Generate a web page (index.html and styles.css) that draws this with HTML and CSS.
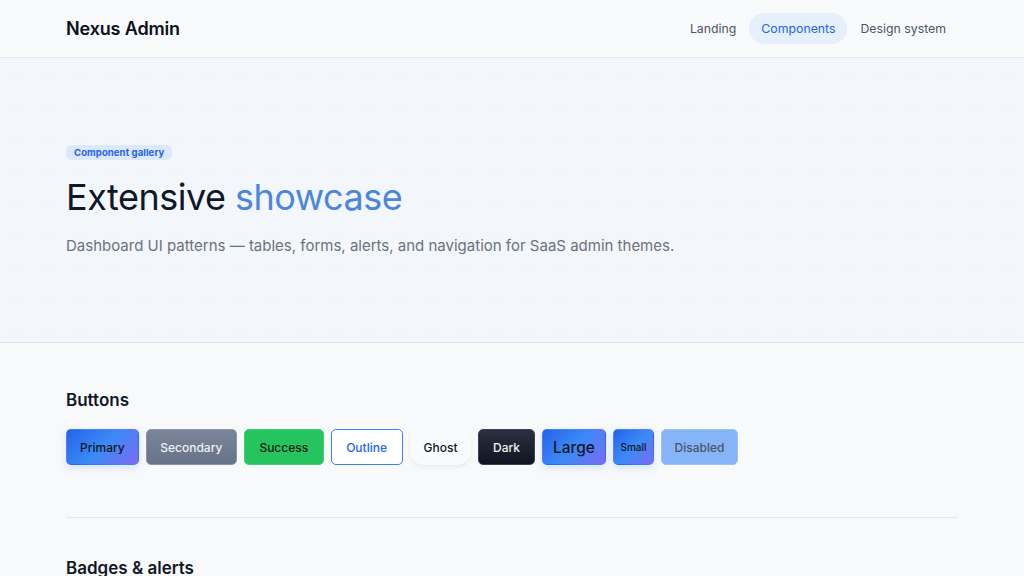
FILE: index.html
```html
<!DOCTYPE html>
<html lang="en">
<head>
<meta charset="utf-8">
<title>Nexus Admin — Components</title>
<link rel="stylesheet" href="styles.css">
</head>
<body>
<header class="topbar">
  <div class="container topbar-inner">
    <div class="brand">Nexus Admin</div>
    <nav class="nav">
      <a class="nav-link">Landing</a>
      <a class="nav-link active">Components</a>
      <a class="nav-link">Design system</a>
    </nav>
  </div>
</header>
<section class="hero">
  <div class="container hero-inner">
    <span class="eyebrow">Component gallery</span>
    <h1 class="hero-title">Extensive <span class="accent">showcase</span></h1>
    <p class="hero-sub">Dashboard UI patterns — tables, forms, alerts, and navigation for SaaS admin themes.</p>
  </div>
</section>
<main class="content">
  <div class="container">
    <section class="block">
      <h2 class="block-title">Buttons</h2>
      <div class="btn-row">
        <button class="btn btn-primary">Primary</button>
        <button class="btn btn-secondary">Secondary</button>
        <button class="btn btn-success">Success</button>
        <button class="btn btn-outline">Outline</button>
        <button class="btn btn-ghost">Ghost</button>
        <button class="btn btn-dark">Dark</button>
        <button class="btn btn-primary btn-lg">Large</button>
        <button class="btn btn-primary btn-sm">Small</button>
        <button class="btn btn-disabled">Disabled</button>
      </div>
    </section>
    <hr class="divider">
    <section class="block block-next">
      <h2 class="block-title">Badges &amp; alerts</h2>
    </section>
  </div>
</main>
</body>
</html>
```
FILE: styles.css
```css
* { box-sizing: border-box; }
html, body { margin: 0; padding: 0; }
body {
  font-family: Inter, "Noto Sans", "Liberation Sans", sans-serif;
  color: #111827;
  background-color: #f8f9fb;
  background-image: radial-gradient(circle, rgba(148, 163, 184, 0.08) 1px, transparent 1.2px);
  background-size: 32px 32px;
  overflow: hidden;
}
.container {
  max-width: 892px;
  margin: 0 auto;
}
.topbar {
  height: 58px;
  border-bottom: 1px solid #e6e9ef;
  background: rgba(249, 250, 252, 0.92);
}
.topbar-inner {
  height: 57px;
  display: flex;
  align-items: center;
  justify-content: space-between;
}
.brand {
  font-size: 18px;
  font-weight: 600;
  letter-spacing: -0.15px;
  color: #0b0f19;
}
.nav {
  display: flex;
  align-items: center;
  gap: 1px;
  margin-right: 0;
}
.nav-link {
  font-size: 12.3px;
  color: #4b5563;
  padding: 8px 12px;
  border-radius: 16px;
  line-height: 15px;
}
.nav-link.active {
  background: #e6effc;
  color: #2563eb;
}
.hero {
  height: 285px;
  background-color: #f3f6fb;
  background-image: radial-gradient(circle, rgba(148, 163, 184, 0.07) 1px, transparent 1.2px);
  background-size: 32px 32px;
  border-bottom: 1px solid #dfe3ec;
  padding-top: 87px;
}
.hero-inner {
  display: flex;
  flex-direction: column;
  align-items: flex-start;
}
.eyebrow {
  display: block;
  font-size: 9.5px;
  font-weight: 700;
  color: #2563eb;
  background: #dce8fb;
  padding: 2px 8px;
  border-radius: 6px;
  line-height: 11px;
  letter-spacing: 0.1px;
}
.hero-title {
  margin: 15px 0 0;
  font-size: 36px;
  font-weight: 400;
  letter-spacing: -0.5px;
  line-height: 44px;
  color: #0f172a;
}
.accent { color: #4a86de; }
.hero-sub {
  margin: 17px 0 0;
  font-size: 15px;
  color: #6b7280;
  line-height: 20px;
}
.content { padding-top: 46px; }
.block-title {
  margin: 0;
  font-size: 17px;
  font-weight: 600;
  line-height: 22px;
  color: #111827;
}
.btn-row {
  display: flex;
  align-items: center;
  gap: 7px;
  margin-top: 18px;
}
.btn {
  font-family: inherit;
  height: 36px;
  font-size: 12px;
  font-weight: 500;
  padding: 0 14px;
  border-radius: 5px;
  border: 1px solid transparent;
  cursor: pointer;
}
.btn-primary {
  background: linear-gradient(135deg, #2563eb 0%, #3b8af5 50%, #7c6af3 100%);
  color: #111827;
  box-shadow: 0 3px 8px rgba(59, 130, 246, 0.18);
  padding: 0 13px;
}
.btn-secondary {
  background: linear-gradient(180deg, #7a8599, #667389);
  color: #eef1f5;
  border-color: #8a94a6;
  padding: 0 13.5px;
}
.btn-success {
  background: #25c45f;
  color: #0f1a12;
  border-color: #3fcf73;
  padding: 0 14.5px;
}
.btn-outline {
  background: #ffffff;
  color: #2563eb;
  border: 1.5px solid #3b82f6;
  padding: 0 14.5px;
}
.btn-ghost {
  background: #f9fafb;
  color: #111827;
  border-radius: 14px;
  box-shadow: 0 2px 4px rgba(15, 23, 42, 0.06);
  padding: 0 13px;
}
.btn-dark {
  background: linear-gradient(180deg, #2a3040, #111522);
  color: #f3f4f6;
  border-color: #3a4150;
  padding: 0 13.5px;
}
.btn-primary.btn-lg {
  font-size: 15.5px;
  padding: 0 10.5px;
}
.btn-primary.btn-sm {
  font-size: 10px;
  padding: 0 6px;
}
.btn-disabled {
  background: #86b4f8;
  color: #4b5563;
  border-color: #9cc2f9;
  padding: 0 13px;
}
.divider {
  border: 0;
  border-top: 1px solid #e5e7eb;
  margin: 52px 0 0;
}
.block-next { padding-top: 39px; }
```
